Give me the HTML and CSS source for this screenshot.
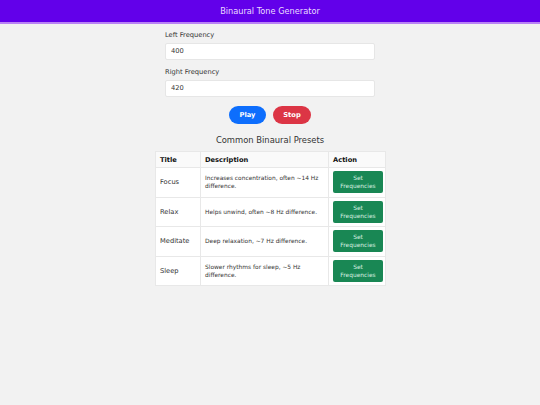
FILE: index.html
```html
<!DOCTYPE html>
<html>
<head>
<meta charset="utf-8">
<link rel="stylesheet" href="styles.css">
</head>
<body>
<header class="topbar">Binaural Tone Generator</header>
<main class="wrap">
  <div class="form">
    <label class="lbl">Left Frequency</label>
    <div class="inp">400</div>
    <label class="lbl">Right Frequency</label>
    <div class="inp">420</div>
  </div>
  <div class="btns">
    <button class="pill play">Play</button>
    <button class="pill stop">Stop</button>
  </div>
  <h2 class="heading">Common Binaural Presets</h2>
  <table class="presets">
    <thead>
      <tr><th class="c1">Title</th><th class="c2">Description</th><th class="c3">Action</th></tr>
    </thead>
    <tbody>
      <tr><td class="c1">Focus</td><td class="c2 desc">Increases concentration, often ~14 Hz difference.</td><td class="c3"><button class="set">Set Frequencies</button></td></tr>
      <tr><td class="c1">Relax</td><td class="c2 desc">Helps unwind, often ~8 Hz difference.</td><td class="c3"><button class="set">Set Frequencies</button></td></tr>
      <tr><td class="c1">Meditate</td><td class="c2 desc">Deep relaxation, ~7 Hz difference.</td><td class="c3"><button class="set">Set Frequencies</button></td></tr>
      <tr><td class="c1">Sleep</td><td class="c2 desc">Slower rhythms for sleep, ~5 Hz difference.</td><td class="c3"><button class="set">Set Frequencies</button></td></tr>
    </tbody>
  </table>
</main>
</body>
</html>
```
FILE: styles.css
```css
* { box-sizing: border-box; }
html, body { margin: 0; padding: 0; }
body {
  background: #f2f2f2;
  font-family: "DejaVu Sans", Verdana, sans-serif;
  color: #333;
}
.topbar {
  height: 24px;
  background: #6200ea;
  border-bottom: 2px solid #b982f5;
  color: #eadcff;
  font-size: 8.2px;
  line-height: 22px;
  text-align: center;
}
.wrap {
  width: 230px;
  margin: 0 auto;
}
.form {
  padding: 6px 10px 0;
  display: flex;
  flex-direction: column;
}
.lbl {
  font-size: 6.7px;
  line-height: 10px;
  color: #333;
  margin-bottom: 3px;
}
.inp {
  height: 17px;
  background: #fff;
  border: 1px solid #e6e6e6;
  border-radius: 2px;
  font-size: 6.7px;
  line-height: 15px;
  padding: 0 5px;
  color: #333;
  margin-bottom: 7px;
}
.btns {
  display: flex;
  justify-content: center;
  gap: 7px;
  margin-top: 2px;
}
.pill {
  height: 18px;
  border: none;
  border-radius: 9px;
  color: #fff;
  font-family: "DejaVu Sans", Verdana, sans-serif;
  font-weight: bold;
  font-size: 6.7px;
  padding: 0;
}
.play { background: #0d6efd; width: 37px; }
.stop { background: #dc3545; width: 38px; }
.heading {
  margin: 11px 0 6px;
  font-weight: normal;
  font-size: 8.4px;
  line-height: 10px;
  text-align: center;
  color: #333;
}
.presets {
  width: 230px;
  border-collapse: collapse;
  background: #fff;
  table-layout: fixed;
}
.presets th, .presets td {
  border: 1px solid #e8e8e8;
  padding: 0 4px;
  text-align: left;
  vertical-align: middle;
  font-size: 6.7px;
}
.presets th {
  height: 16px;
  font-weight: bold;
  color: #111;
  background: #fafafa;
}
.presets td { height: 29.5px; color: #333; }
.c1 { width: 45px; }
.c2 { width: 128px; }
.c3 { width: 57px; }
.presets td.desc { font-size: 5.9px; line-height: 8px; }
.set {
  display: block;
  width: 50px;
  height: 22px;
  background: #198754;
  border: none;
  border-radius: 2px;
  color: #d8f0e0;
  font-family: "DejaVu Sans", Verdana, sans-serif;
  font-size: 5.9px;
  line-height: 8px;
  padding: 0 6px;
}
```
